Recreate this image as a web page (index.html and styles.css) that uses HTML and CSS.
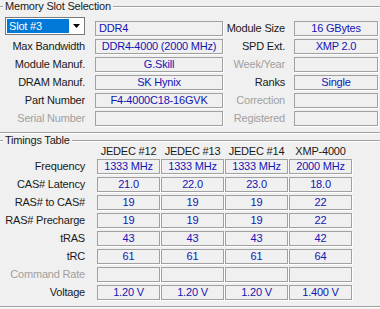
FILE: index.html
```html
<!DOCTYPE html>
<html lang="en">
<head>
  <meta charset="UTF-8">
  <title>SPD</title>
  <link rel="stylesheet" href="styles.css">
</head>
<body>
  <fieldset class="group slot-group">
    <legend>Memory Slot Selection</legend>
    <div class="slot-grid">
      <div class="combo">
        <span class="combo-value">Slot #3</span>
        <span class="combo-btn">
          <svg width="7" height="4" viewBox="0 0 7 4"><path d="M0,0 H7 L3.5,4 Z" fill="#000"/></svg>
        </span>
      </div>
      <div class="field plain">DDR4</div>
      <div class="label">Module Size</div>
      <div class="field">16 GBytes</div>

      <div class="label">Max Bandwidth</div>
      <div class="field">DDR4-4000 (2000 MHz)</div>
      <div class="label">SPD Ext.</div>
      <div class="field">XMP 2.0</div>

      <div class="label">Module Manuf.</div>
      <div class="field">G.Skill</div>
      <div class="label off">Week/Year</div>
      <div class="field"></div>

      <div class="label">DRAM Manuf.</div>
      <div class="field">SK Hynix</div>
      <div class="label">Ranks</div>
      <div class="field">Single</div>

      <div class="label">Part Number</div>
      <div class="field">F4-4000C18-16GVK</div>
      <div class="label off">Correction</div>
      <div class="field"></div>

      <div class="label off">Serial Number</div>
      <div class="field"></div>
      <div class="label off">Registered</div>
      <div class="field"></div>
    </div>
  </fieldset>

  <fieldset class="group timings-group">
    <legend>Timings Table</legend>
    <div class="timings-grid">
      <div></div>
      <div class="head">JEDEC #12</div>
      <div class="head">JEDEC #13</div>
      <div class="head">JEDEC #14</div>
      <div class="head">XMP-4000</div>

      <div class="label">Frequency</div>
      <div class="field">1333 MHz</div>
      <div class="field">1333 MHz</div>
      <div class="field">1333 MHz</div>
      <div class="field">2000 MHz</div>

      <div class="label">CAS# Latency</div>
      <div class="field">21.0</div>
      <div class="field">22.0</div>
      <div class="field">23.0</div>
      <div class="field">18.0</div>

      <div class="label">RAS# to CAS#</div>
      <div class="field">19</div>
      <div class="field">19</div>
      <div class="field">19</div>
      <div class="field">22</div>

      <div class="label">RAS# Precharge</div>
      <div class="field">19</div>
      <div class="field">19</div>
      <div class="field">19</div>
      <div class="field">22</div>

      <div class="label">tRAS</div>
      <div class="field">43</div>
      <div class="field">43</div>
      <div class="field">43</div>
      <div class="field">42</div>

      <div class="label">tRC</div>
      <div class="field">61</div>
      <div class="field">61</div>
      <div class="field">61</div>
      <div class="field">64</div>

      <div class="label off">Command Rate</div>
      <div class="field"></div>
      <div class="field"></div>
      <div class="field"></div>
      <div class="field"></div>

      <div class="label">Voltage</div>
      <div class="field">1.20 V</div>
      <div class="field">1.20 V</div>
      <div class="field">1.20 V</div>
      <div class="field">1.400 V</div>
    </div>
  </fieldset>
</body>
</html>
```

FILE: styles.css
```css
body {
  margin: 0;
  width: 380px;
  height: 309px;
  overflow: hidden;
  background: #f0f0f0;
  font-family: 'Liberation Sans', Arial, sans-serif;
  font-size: 11px;
  letter-spacing: -0.2px;
  color: #1a1a1a;
}
/* group boxes run past the window edges, only top and bottom lines show */
.group {
  margin: 0 -10px 0 -2px;
  padding: 0 0 6px 6px;
  border: 1px solid #a0a0a0;
  box-shadow: inset 0 1px 0 #fff, 0 1px 0 #fff;
  min-width: 0;
}
.group legend {
  margin-left: -2px;
  padding: 0 2px;
  line-height: 13px;
  background: #f0f0f0;
}
.timings-group {
  margin-top: 1px;
}
.slot-grid {
  display: grid;
  grid-template-columns: 90px 128px 71px 84px;
  grid-auto-rows: 18px;
  padding-top: 5px;
}
.timings-grid {
  display: grid;
  grid-template-columns: 91px 63px 63px 63px 63px;
  grid-template-rows: 9px;
  grid-auto-rows: 18px;
  column-gap: 1px;
}
.label {
  align-self: end;
  height: 15px;
  line-height: 15px;
  text-align: right;
  padding-right: 10px;
  white-space: nowrap;
}
.slot-grid .label:nth-child(4n+3) {
  padding-right: 9px;
}
.timings-grid .label {
  padding-right: 11px;
}
.label.off {
  color: #a0a0a0;
}
.head {
  line-height: 9px;
  text-align: center;
  white-space: nowrap;
}
.field {
  align-self: end;
  height: 15px;
  box-sizing: border-box;
  border: 1px solid #a0a0a0;
  box-shadow: 1px 1px 0 #fff;
  line-height: 13px;
  text-align: center;
  color: #1414b4;
  white-space: nowrap;
  overflow: hidden;
}
.field.plain {
  text-align: left;
  padding-left: 3px;
}
.combo {
  align-self: start;
  margin-top: -1px;
  width: 80px;
  height: 18px;
  box-sizing: border-box;
  border: 1px solid #7a7a7a;
  background: #fff;
  padding: 1px;
  display: flex;
}
.combo-value {
  flex: 1;
  background: #0078d7;
  color: #fff;
  line-height: 14px;
  padding-left: 2px;
}
.combo-btn {
  width: 14px;
  display: flex;
  align-items: center;
  justify-content: center;
  background: #fff;
}
```
